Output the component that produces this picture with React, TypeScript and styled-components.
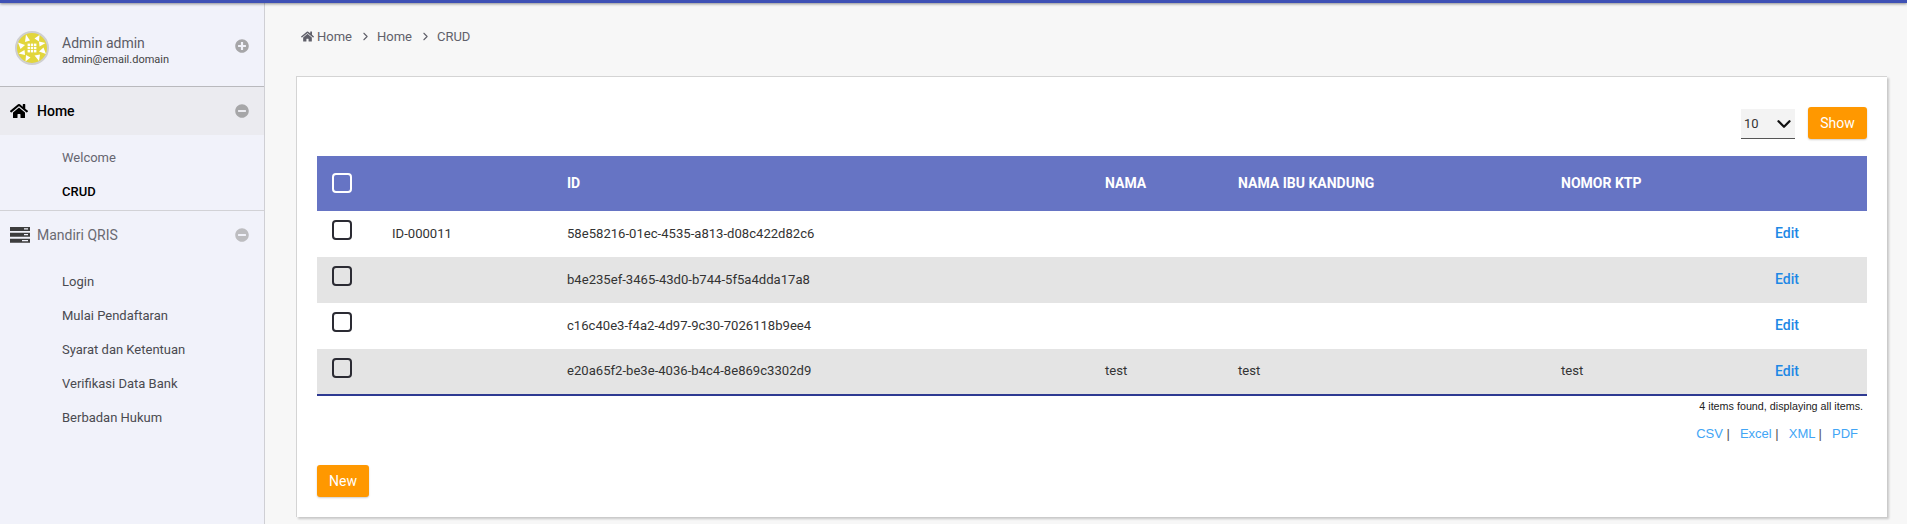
import { createGlobalStyle, styled } from "styled-components";
import { FaHome, FaMinusCircle, FaPlusCircle } from "react-icons/fa";
import { FiChevronDown, FiChevronRight } from "react-icons/fi";

const GlobalStyle = createGlobalStyle`
  html, body {
    margin: 0;
    height: 100%;
    background: #f7f7f7;
    font-family: Roboto, "Liberation Sans", sans-serif;
    overflow: hidden;
  }
  * { box-sizing: border-box; }
`;

const Page = styled.div`
  display: flex;
  flex-direction: column;
  height: 524px;
`;

const TopBar = styled.div`
  height: 3px;
  flex-shrink: 0;
  background: #3f51b5;
  box-shadow: 0 1px 3px rgba(0, 0, 0, 0.45);
  position: relative;
  z-index: 1;
`;

const Body = styled.div`
  flex: 1;
  display: flex;
`;

const Sidebar = styled.aside`
  width: 265px;
  flex-shrink: 0;
  background: #f1f2fa;
  border-right: 1px solid #cfcfd4;
`;

const UserBlock = styled.div`
  height: 84px;
  display: flex;
  align-items: center;
  padding: 6px 15px 0;
  border-bottom: 1px solid #b9b9bd;
`;

const Avatar = styled.svg`
  width: 34px;
  height: 34px;
  flex-shrink: 0;
  margin-right: 13px;
`;

const UserText = styled.div`
  flex: 1;
  display: flex;
  flex-direction: column;
  gap: 2px;
  margin-top: 6px;
`;

const UserName = styled.div`
  font-size: 14px;
  line-height: 16px;
  color: #5c5c66;
`;

const UserMail = styled.div`
  font-size: 11px;
  line-height: 14px;
  color: #444;
`;

const Toggle = styled.span<{ $faded?: boolean; $raised?: boolean }>`
  display: flex;
  color: ${({ $faded }) => ($faded ? "#bdbdc0" : "#a6a6a8")};
  font-size: 14px;
  margin-top: ${({ $raised }) => ($raised ? "-3px" : "0")};
`;

const MenuHead = styled.div<{ $active?: boolean }>`
  height: 48px;
  display: flex;
  align-items: center;
  padding: 0 15px 0 10px;
  background: ${({ $active }) => ($active ? "#ebebf0" : "transparent")};
`;

const MenuIcon = styled.span`
  width: 27px;
  display: flex;
  font-size: 18px;
  color: #000;
`;

const MenuTitle = styled.span<{ $active?: boolean }>`
  flex: 1;
  font-size: 14px;
  font-weight: ${({ $active }) => ($active ? 500 : 400)};
  color: ${({ $active }) => ($active ? "#000" : "#6a6a72")};
`;

const SubMenu = styled.div<{ $divided?: boolean }>`
  padding: 6px 0 1px;
  border-bottom: ${({ $divided }) => ($divided ? "1px solid #d2d2d6" : "none")};
`;

const SubItem = styled.div<{ $tone?: "muted" | "current" }>`
  height: 34px;
  line-height: 34px;
  padding-left: 62px;
  font-size: 13px;
  color: ${({ $tone }) =>
    $tone === "current" ? "#000" : $tone === "muted" ? "#666670" : "#4a4a50"};
  font-weight: ${({ $tone }) => ($tone === "current" ? 500 : 400)};
`;

const Main = styled.main`
  flex: 1;
  padding: 0 20px 0 31px;
`;

const Crumbs = styled.div`
  height: 73px;
  display: flex;
  align-items: center;
  padding: 0 0 7px 5px;
  font-size: 13px;
  color: #60606a;
`;

const CrumbGap = styled.span`
  display: flex;
  margin: 0 5px 0 7px;
  font-size: 13px;
`;

const CrumbHome = styled.span`
  display: flex;
  font-size: 13px;
  margin-right: 3px;
`;

const Card = styled.section`
  height: 441px;
  background: #fff;
  border: 1px solid #d4d4d4;
  border-width: 1px 0 0 1px;
  box-shadow: 2px 2px 2px #c8c8c8;
  padding: 30px 20px 0;
`;

const TopTools = styled.div`
  height: 49px;
  display: flex;
  justify-content: flex-end;
  align-items: flex-start;
  gap: 13px;
`;

const PageSize = styled.div`
  width: 54px;
  height: 30px;
  margin-top: 2px;
  background: #f3f3f3;
  border-bottom: 1px solid #555;
  display: flex;
  align-items: center;
  justify-content: space-between;
  padding: 0 0 0 3px;
  font-size: 13px;
  color: #333;
`;

const Chevron = styled.span`
  display: flex;
  font-size: 22px;
  color: #111;
  svg {
    stroke-width: 2.5;
  }
`;

const OrangeButton = styled.button<{ $width: number }>`
  width: ${({ $width }) => $width}px;
  height: 32px;
  padding: 0;
  border: none;
  border-radius: 3px;
  background: #ff9800;
  color: #fff;
  font-family: Roboto, sans-serif;
  font-size: 14px;
  box-shadow: 0 1px 2px rgba(0, 0, 0, 0.2);
`;

const Table = styled.table`
  width: 100%;
  table-layout: fixed;
  border-collapse: collapse;
  border-bottom: 2px solid #2e3a92;
  font-size: 13.1px;
  color: #333;
`;

const HeadRow = styled.tr`
  height: 55px;
  background: #6674c4;
`;

const HeadCell = styled.th<{ $width?: number }>`
  width: ${({ $width }) => ($width ? `${$width}px` : "auto")};
  padding: 0 15px 2px;
  text-align: left;
  color: #fff;
  font-size: 14px;
  font-weight: 700;
`;

const Row = styled.tr<{ $striped: boolean }>`
  height: 46px;
  background: ${({ $striped }) => ($striped ? "#e4e4e4" : "#fff")};
`;

const Cell = styled.td`
  padding: 0 15px 2px;
  white-space: nowrap;
`;

const Check = styled.span<{ $light?: boolean }>`
  display: block;
  width: 20px;
  height: 20px;
  border: 2px solid ${({ $light }) => ($light ? "#fff" : "#2b2b33")};
  border-radius: 4px;
  margin-top: ${({ $light }) => ($light ? "0" : "-6px")};
`;

const EditLink = styled.a`
  color: #1e88e5;
  font-size: 14px;
  font-weight: 500;
`;

const Found = styled.div`
  margin-top: 3px;
  padding-right: 4px;
  text-align: right;
  font-family: "Liberation Sans", sans-serif;
  font-size: 10.75px;
  line-height: 14px;
  color: #222;
`;

const Exports = styled.div`
  margin-top: 13px;
  padding-right: 9px;
  display: flex;
  justify-content: flex-end;
  gap: 10px;
  font-family: "Liberation Sans", sans-serif;
  font-size: 13px;
  line-height: 16px;
`;

const ExportLink = styled.a<{ $last?: boolean }>`
  color: #42a5f5;
  &::after {
    content: ${({ $last }) => ($last ? '""' : '" |"')};
    color: #555;
    white-space: pre;
  }
`;

const Actions = styled.div`
  margin-top: 23px;
`;

const ServerIcon = () => (
  <svg width="20" height="16" viewBox="0 0 20 16">
    <path
      fill="#3d3d3d"
      fillRule="evenodd"
      d="M0 0h20v4H0zM14 1.3v1.2h4V1.3zM0 5.8h20v4H0zM14 7.1v1.2h4V7.1zM0 11.8h20v4H0zM12 13.1v1.2h6v-1.2z"
    />
  </svg>
);

const cells = [12.6, 15.8, 19];

const Logo = () => (
  <Avatar viewBox="0 0 34 34">
    <circle cx="17" cy="17" r="16" fill="#e2d63c" stroke="#cfcfcf" strokeWidth="2" />
    <g fill="#fff">
      {cells.flatMap((y) =>
        cells.map((x) => <rect key={`${x}-${y}`} x={x} y={y} width="2.4" height="2.4" />)
      )}
      <path d="M11 3.5l4 6-5 1.500z" />
      <path d="M24.500 4l-.5 6.500-4.500-3z" />
      <path d="M30.500 12l-6 3.500-.5-5z" />
      <path d="M31 23l-7-2.500 4.500-4z" />
      <path d="M24 30l-4.500-5.500 5.500-1z" />
      <path d="M10.500 30.500l.5-6.500 4.500 2.500z" />
      <path d="M3.500 22.500l6-3.500.5 5z" />
      <path d="M3 11.500l7 2.500-4.500 4z" />
    </g>
  </Avatar>
);

const rows = [
  { code: "ID-000011", id: "58e58216-01ec-4535-a813-d08c422d82c6", nama: "", ibu: "", ktp: "" },
  { code: "", id: "b4e235ef-3465-43d0-b744-5f5a4dda17a8", nama: "", ibu: "", ktp: "" },
  { code: "", id: "c16c40e3-f4a2-4d97-9c30-7026118b9ee4", nama: "", ibu: "", ktp: "" },
  { code: "", id: "e20a65f2-be3e-4036-b4c4-8e869c3302d9", nama: "test", ibu: "test", ktp: "test" },
];

const qrisItems = [
  "Login",
  "Mulai Pendaftaran",
  "Syarat dan Ketentuan",
  "Verifikasi Data Bank",
  "Berbadan Hukum",
];

export default function App() {
  return (
    <Page>
      <GlobalStyle />
      <TopBar />
      <Body>
        <Sidebar>
          <UserBlock>
            <Logo />
            <UserText>
              <UserName>Admin admin</UserName>
              <UserMail>admin@email.domain</UserMail>
            </UserText>
            <Toggle $raised>
              <FaPlusCircle />
            </Toggle>
          </UserBlock>
          <MenuHead $active>
            <MenuIcon>
              <FaHome />
            </MenuIcon>
            <MenuTitle $active>Home</MenuTitle>
            <Toggle>
              <FaMinusCircle />
            </Toggle>
          </MenuHead>
          <SubMenu $divided>
            <SubItem $tone="muted">Welcome</SubItem>
            <SubItem $tone="current">CRUD</SubItem>
          </SubMenu>
          <MenuHead>
            <MenuIcon>
              <ServerIcon />
            </MenuIcon>
            <MenuTitle>Mandiri QRIS</MenuTitle>
            <Toggle $faded>
              <FaMinusCircle />
            </Toggle>
          </MenuHead>
          <SubMenu>
            {qrisItems.map((item) => (
              <SubItem key={item}>{item}</SubItem>
            ))}
          </SubMenu>
        </Sidebar>
        <Main>
          <Crumbs>
            <CrumbHome>
              <FaHome />
            </CrumbHome>
            Home
            <CrumbGap>
              <FiChevronRight />
            </CrumbGap>
            Home
            <CrumbGap>
              <FiChevronRight />
            </CrumbGap>
            CRUD
          </Crumbs>
          <Card>
            <TopTools>
              <PageSize>
                10
                <Chevron>
                  <FiChevronDown />
                </Chevron>
              </PageSize>
              <OrangeButton $width={59}>Show</OrangeButton>
            </TopTools>
            <Table>
              <thead>
                <HeadRow>
                  <HeadCell $width={60}>
                    <Check $light />
                  </HeadCell>
                  <HeadCell $width={175} />
                  <HeadCell $width={538}>ID</HeadCell>
                  <HeadCell $width={133}>NAMA</HeadCell>
                  <HeadCell $width={323}>NAMA IBU KANDUNG</HeadCell>
                  <HeadCell $width={214}>NOMOR KTP</HeadCell>
                  <HeadCell />
                </HeadRow>
              </thead>
              <tbody>
                {rows.map((row, i) => (
                  <Row key={row.id} $striped={i % 2 === 1}>
                    <Cell>
                      <Check />
                    </Cell>
                    <Cell>{row.code}</Cell>
                    <Cell>{row.id}</Cell>
                    <Cell>{row.nama}</Cell>
                    <Cell>{row.ibu}</Cell>
                    <Cell>{row.ktp}</Cell>
                    <Cell>
                      <EditLink>Edit</EditLink>
                    </Cell>
                  </Row>
                ))}
              </tbody>
            </Table>
            <Found>4 items found, displaying all items.</Found>
            <Exports>
              <ExportLink>CSV</ExportLink>
              <ExportLink>Excel</ExportLink>
              <ExportLink>XML</ExportLink>
              <ExportLink $last>PDF</ExportLink>
            </Exports>
            <Actions>
              <OrangeButton $width={52}>New</OrangeButton>
            </Actions>
          </Card>
        </Main>
      </Body>
    </Page>
  );
}
